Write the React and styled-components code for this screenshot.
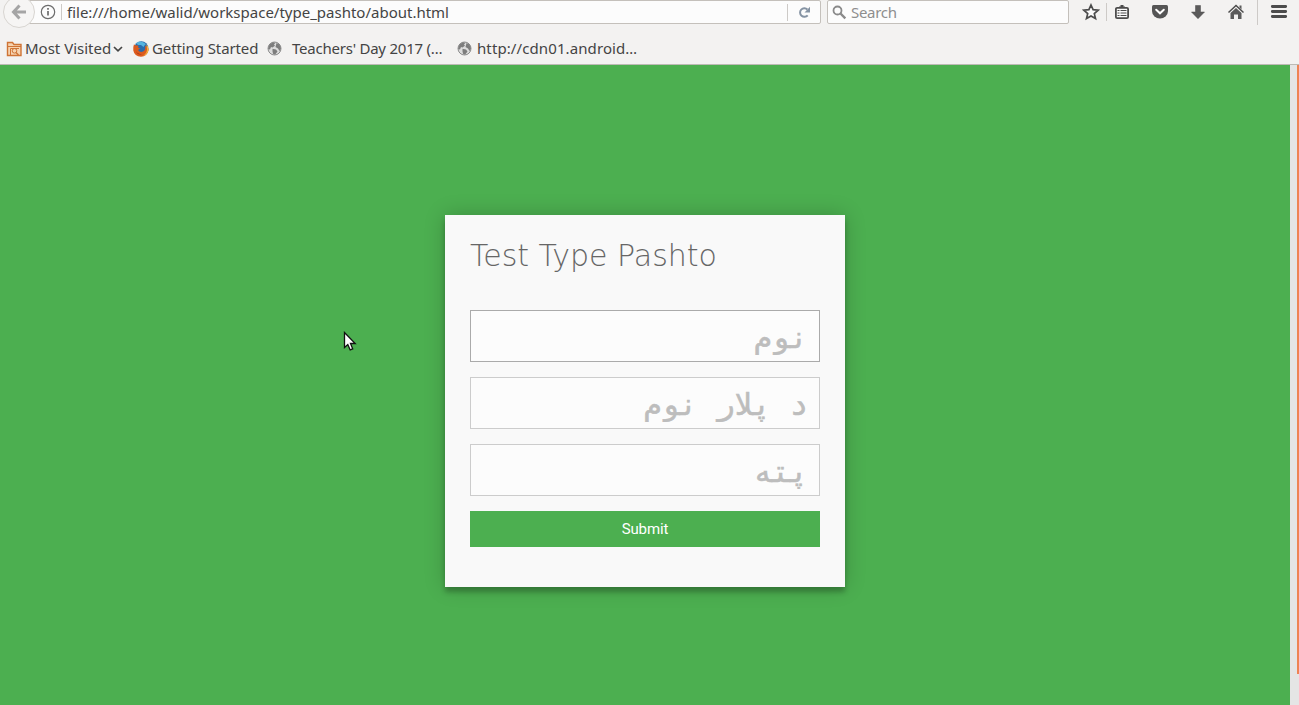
import React from 'react';
import styled, { createGlobalStyle } from 'styled-components';

const GlobalStyle = createGlobalStyle`
  *, *::before, *::after { box-sizing: border-box; }
  html, body { margin: 0; height: 100%; overflow: hidden; }
  body { background: #f3f2f0; }
`;

const Window = styled.div`
  width: 1299px;
  height: 705px;
  display: flex;
  flex-direction: column;
  overflow: hidden;
  font-family: 'Noto Sans', 'Open Sans', sans-serif;
  font-size: 15px;
  color: #444;
`;

const Chrome = styled.header`
  height: 65px;
  background: #f3f2f1;
  border-bottom: 1px solid #bdbab5;
`;

const NavBar = styled.div`
  height: 32px;
  display: flex;
  align-items: flex-start;
`;

const BackButton = styled.div`
  flex: none;
  width: 32px;
  height: 32px;
  margin: -4px 0 0 3px;
  border: 1px solid #d8d5d1;
  border-radius: 50%;
  background: #f6f5f4;
  z-index: 1;
  display: flex;
  align-items: center;
  justify-content: center;
`;

const UrlBar = styled.div`
  flex: none;
  width: 802px;
  height: 24px;
  margin-left: -16px;
  padding-left: 21px;
  background: #fcfcfc;
  border: 1px solid #c4c0bb;
  border-radius: 2px;
  display: flex;
  align-items: center;
`;

const Divider = styled.span`
  flex: none;
  width: 1px;
  height: ${(p) => p.$h || 17}px;
  background: #cdcac7;
`;

const Text = styled.span`
  white-space: pre;
  line-height: 20px;
  letter-spacing: ${(p) => p.$ls || 0}px;
`;

const Address = styled(Text)`
  flex: 1;
`;

const Slot = styled.span`
  width: ${(p) => p.$w}px;
  margin-right: ${(p) => p.$mr || 0}px;
  flex: none;
  display: flex;
  align-items: center;
  justify-content: center;
`;

const SearchBar = styled.div`
  flex: none;
  width: 242px;
  height: 24px;
  margin-left: 6px;
  padding-left: 4px;
  background: #fcfcfc;
  border: 1px solid #c4c0bb;
  border-radius: 2px;
  display: flex;
  align-items: center;
  gap: 4px;
  color: #8e8e8e;
`;

const Tools = styled.div`
  flex: 1;
  height: 24px;
  padding-left: 12px;
  display: flex;
  align-items: center;
`;

const Bookmarks = styled.nav`
  height: 33px;
  padding-left: 6px;
  display: flex;
  align-items: center;
`;

const Bookmark = styled.span`
  width: ${(p) => p.$w}px;
  flex: none;
  display: flex;
  align-items: center;
  gap: ${(p) => p.$gap}px;
  svg { flex: none; }
  ${Text} { margin-bottom: 2px; }
`;

const Viewport = styled.div`
  flex: 1;
  display: flex;
`;

const Page = styled.main`
  width: 1290px;
  background: #4caf50;
  padding-top: 150px;
`;

const ScrollTrack = styled.div`
  width: 7px;
  background: #e5e5e5;
`;

const EdgeStrip = styled.div`
  width: 2px;
  background: linear-gradient(#ef8354 609px, #e5e5e5 609px);
`;

const Card = styled.form`
  width: 400px;
  height: 372px;
  margin: 0 auto;
  padding: 21px 25px 0;
  background: #f9f9f9;
  box-shadow: 0 0 20px 0 rgba(0, 0, 0, 0.2), 0 5px 5px 0 rgba(0, 0, 0, 0.24);
`;

const Title = styled.h1`
  margin: 0 0 34px;
  height: 40px;
  font: 200 30px/40px 'DejaVu Sans', sans-serif;
  color: #666;
  white-space: nowrap;
`;

const Field = styled.input`
  display: block;
  width: 350px;
  height: 52px;
  margin: 0 0 15px;
  padding: 2px 11px 0;
  border: 1px solid ${(p) => (p.$active ? '#aaa' : '#ccc')};
  border-radius: 0;
  outline: none;
  background: #fcfcfc;
  direction: rtl;
  font: 400 30px 'DejaVu Sans Mono', monospace;
  word-spacing: 1px;
  color: #444;
  &::placeholder {
    color: #bdbdbd;
    opacity: 1;
    -webkit-text-stroke: 0.6px #bdbdbd;
  }
`;

const Submit = styled.button`
  display: block;
  width: 350px;
  height: 36px;
  padding: 0;
  border: 0;
  background: #4caf50;
  color: #fff;
  font: 400 15px Roboto, sans-serif;
  letter-spacing: -0.1px;
`;

const Pointer = styled.svg`
  position: absolute;
  left: 343px;
  top: 331px;
`;

const ArrowLeft = () => (
  <svg width="16" height="16" viewBox="0 0 16 16" fill="none" stroke="#a5a5a5" strokeWidth="3">
    <path d="M8.500 1.500 2.500 8l6 6.500M3 8h12" />
  </svg>
);

const Info = () => (
  <svg width="16" height="16" viewBox="0 0 16 16" fill="none" stroke="#6c6c6c" style={{ flex: 'none' }}>
    <circle cx="8" cy="8" r="6.700" strokeWidth="1.200" />
    <path d="M8 7v4.500M8 4v1.700" strokeWidth="1.700" />
  </svg>
);

const Reload = () => (
  <svg width="13" height="13" viewBox="0 0 13 13">
    <path d="M9.700 9.300A4.300 4.300 0 1 1 9.400 3.500" fill="none" stroke="#8593a3" strokeWidth="2" />
    <path d="M12 .8v5.700H6.500z" fill="#8593a3" />
  </svg>
);

const Magnifier = () => (
  <svg width="15" height="15" viewBox="0 0 15 15" fill="none" stroke="#8a8a8a">
    <circle cx="5.500" cy="5.500" r="4" strokeWidth="1.800" />
    <path d="m8.500 8.500 4.800 4.800" strokeWidth="2.400" />
  </svg>
);

const Star = () => (
  <svg width="18" height="18" viewBox="0 0 18 18">
    <path d="m9 2 2.100 4.700 5.100.5-3.900 3.400 1.200 5L9 13l-4.500 2.600 1.200-5L1.800 7.200l5.100-.5z" fill="#fafafa" stroke="#4c4c4c" strokeWidth="1.700" />
  </svg>
);

const Clipboard = () => (
  <svg width="16" height="16" viewBox="0 0 16 16">
    <rect x="1.900" y="3.900" width="12.200" height="10.200" rx="1.200" fill="#fafafa" stroke="#4c4c4c" strokeWidth="1.800" />
    <path d="M5 4V2.500h1.500V1h3v1.500H11V4z" fill="#4c4c4c" />
    <path d="M3.500 6.500h2m1 0h6M3.500 9h2m1 0h6M3.500 11.500h2m1 0h6" stroke="#4c4c4c" strokeWidth="1" />
  </svg>
);

const Pocket = () => (
  <svg width="18" height="16" viewBox="0 0 18 16">
    <path d="M2.500 1h13Q17 1 17 2.500V7a8 7.500 0 0 1-16 0V2.500Q1 1 2.500 1z" fill="#555" />
    <path d="m5.200 5.800 3.800 3.500 3.800-3.500" fill="none" stroke="#fff" strokeWidth="2" strokeLinecap="round" />
  </svg>
);

const Download = () => (
  <svg width="16" height="16" viewBox="0 0 16 16">
    <path d="M5.500 1.500h5V8h4L8 14.700 1.500 8h4z" fill="#5b5b5b" stroke="#4a4a4a" strokeWidth=".5" />
  </svg>
);

const Home = () => (
  <svg width="18" height="16" viewBox="0 0 18 16">
    <path d="m1.500 8.500 7.500-7 7.500 7" fill="none" stroke="#4c4c4c" strokeWidth="1.500" />
    <path d="M12.500 1.500h2v4l-2-2zM9 4l5.500 5v6H11v-4.500H7V15H3.500V9z" fill="#5b5b5b" />
  </svg>
);

const Menu = () => (
  <svg width="18" height="16" viewBox="0 0 18 16">
    <path d="M2.300 2.500h13.400M2.300 7.500h13.400M2.300 12.500h13.400" stroke="#4c4c4c" strokeWidth="2.800" strokeLinecap="round" />
  </svg>
);

const Folder = () => (
  <svg width="17" height="16" viewBox="0 0 17 16" fill="none" stroke="#cf7435">
    <path d="M1.500 14.500v-13h5l1.500 2h7v11z" fill="#f6d3b0" strokeWidth="1.400" />
    <path d="M2 5.500h13M4.500 14V7.500h8.500" />
    <circle cx="8.500" cy="9.800" r="2.300" />
    <path d="m10 11.500 2.500 2.500" strokeWidth="1.500" />
  </svg>
);

const Chevron = () => (
  <svg width="10" height="8" viewBox="0 0 10 8">
    <path d="m1 2 4 3.800L9 2" fill="none" stroke="#444" strokeWidth="1.700" />
  </svg>
);

const Firefox = () => (
  <svg width="16" height="16" viewBox="0 0 16 16">
    <circle cx="8.300" cy="7.200" r="7" fill="#2b6cab" />
    <path d="M3 2Q8-1.500 13 3q-1.500 1-2.500 3L8 4 5 4z" fill="#56b4df" />
    <path d="M1 3.200 2.500 4.500Q4 4 5.500 5L5 6.500l2 1L5 9q2 3 5.500 1.200Q13 8.500 12 4.500q3.800 2 3.700 4.500Q14 15.700 8 15.800 1.500 15.500.3 9.500 0 5.500 1 3.200z" fill="#dc5b1e" />
    <path d="M13.500 3q3 4 1.300 8.200Q13 14.500 10 15q4-3 4-6.500z" fill="#f5b43c" />
    <path d="M2 8q1 5 7 5.200-5 1.800-7-5.200z" fill="#a9331a" />
  </svg>
);

const Globe = () => (
  <svg width="15" height="15" viewBox="0 0 15 15">
    <circle cx="7.500" cy="7.500" r="6.500" fill="#dcdcdc" stroke="#8d8d8d" />
    <path d="M1 8 2.500 3.500 6 1.200l2.500.5L7 3.500l1 1.200L5.500 6.500 4 6 3 8.500zM9.500 2l3 1.500 1.500 4-1.500 2.500L11 7.500 8.500 6zM5.500 7.800l3.500.7 1.500 2L8 13.800l-2-1-.5-2.500z" fill="#7d7d7d" />
  </svg>
);

export default function App() {
  return (
    <Window>
      <GlobalStyle />
      <Chrome>
        <NavBar>
          <BackButton><ArrowLeft /></BackButton>
          <UrlBar>
            <Slot $w={14}><Info /></Slot>
            <Slot $w={12}><Divider $h={16} /></Slot>
            <Address>file:///home/walid/workspace/type_pashto/about.html</Address>
            <Divider />
            <Slot $w={32}><Reload /></Slot>
          </UrlBar>
          <SearchBar>
            <Magnifier />
            <Text $ls={-0.3}>Search</Text>
          </SearchBar>
          <Tools>
            <Slot $w={20}><Star /></Slot>
            <Slot $w={11}><Divider $h={18} /></Slot>
            <Slot $w={20} $mr={9}><Clipboard /></Slot>
            <Slot $w={38}><Pocket /></Slot>
            <Slot $w={38}><Download /></Slot>
            <Slot $w={38}><Home /></Slot>
            <Slot $w={5}><Divider $h={26} /></Slot>
            <Slot $w={38}><Menu /></Slot>
          </Tools>
        </NavBar>
        <Bookmarks>
          <Bookmark $w={127} $gap={2}><Folder /><Text>Most Visited</Text><Chevron /></Bookmark>
          <Bookmark $w={134} $gap={3}><Firefox /><Text $ls={-0.1}>Getting Started</Text></Bookmark>
          <Bookmark $w={190} $gap={10}><Globe /><Text $ls={-0.23}>Teachers' Day 2017 (…</Text></Bookmark>
          <Bookmark $w={190} $gap={5}><Globe /><Text $ls={0.1}>http://cdn01.android…</Text></Bookmark>
        </Bookmarks>
      </Chrome>
      <Viewport>
        <Page>
          <Card onSubmit={(e) => e.preventDefault()}>
            <Title>Test Type Pashto</Title>
            <Field $active placeholder="نوم" />
            <Field placeholder="د پلار نوم" />
            <Field placeholder="پته" />
            <Submit type="submit">Submit</Submit>
          </Card>
        </Page>
        <ScrollTrack />
        <EdgeStrip />
      </Viewport>
      <Pointer width="14" height="22" viewBox="0 0 14 22">
        <path d="M1.500 1.500v15l3.300-3 2.400 5.400 2.500-1.100L7.500 12.500h4.700z" fill="#fff" stroke="#111" strokeWidth="1.300" />
      </Pointer>
    </Window>
  );
}
